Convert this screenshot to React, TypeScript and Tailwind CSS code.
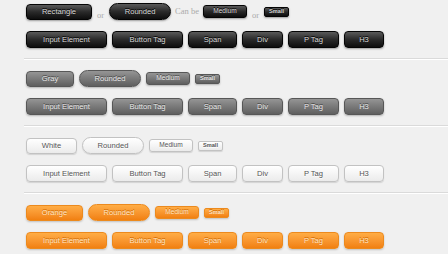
import React from 'react'

type Theme = 'black' | 'gray' | 'white' | 'orange'

const SKIN: Record<Theme, string> = {
  black:
    'bg-linear-to-b from-[#5a5a5a] via-[#2a2a2a] to-[#0e0e0e] border border-[#050505] text-[#d8d8d8] [text-shadow:0_-1px_0_#000] shadow-[0_1px_2px_rgba(0,0,0,0.35)]',
  gray:
    'bg-linear-to-b from-[#959595] to-[#5f5f5f] border border-[#575757] text-[#e8e8e8] [text-shadow:0_-1px_0_#444] shadow-[0_1px_2px_rgba(0,0,0,0.25)]',
  white:
    'bg-linear-to-b from-white to-[#ebebeb] border border-[#c2c2c2] text-[#555] [text-shadow:0_1px_0_#fff] shadow-[0_1px_1px_rgba(0,0,0,0.12)]',
  orange:
    'bg-linear-to-b from-[#ffad45] to-[#f1800f] border border-[#ec8a1e] text-[#fde3c4] [text-shadow:0_-1px_0_#d06a00] shadow-[0_1px_2px_rgba(0,0,0,0.2)]',
}

const FIRST: Record<Theme, { label: string; w: string }> = {
  black: { label: 'Rectangle', w: 'w-[66px]' },
  gray: { label: 'Gray', w: 'w-[48px]' },
  white: { label: 'White', w: 'w-[51px]' },
  orange: { label: 'Orange', w: 'w-[57px]' },
}

const TAGS = [
  { label: 'Input Element', w: 'w-[81px]' },
  { label: 'Button Tag', w: 'w-[71px]' },
  { label: 'Span', w: 'w-[49px]' },
  { label: 'Div', w: 'w-[41px]' },
  { label: 'P Tag', w: 'w-[51px]' },
  { label: 'H3', w: 'w-[40px]' },
]

const base = "flex items-center justify-center shrink-0 font-['Liberation_Sans',Arial,sans-serif] leading-none antialiased"

function Btn({ theme, className, children }: { theme: Theme; className: string; children: React.ReactNode }) {
  return <span className={`${base} ${SKIN[theme]} ${className}`}>{children}</span>
}

function Note({ children }: { children: React.ReactNode }) {
  return (
    <span className="font-['Liberation_Serif','Times_New_Roman',serif] text-[8.5px] leading-none text-[#aaa]">
      {children}
    </span>
  )
}

function Section({ theme, last }: { theme: Theme; last?: boolean }) {
  const first = FIRST[theme]
  const isBlack = theme === 'black'
  return (
    <div className="flex flex-col">
      <div className={`flex items-center h-[17px] ${isBlack ? 'gap-[4px]' : 'gap-[5px]'}`}>
        <Btn theme={theme} className={`${first.w} h-[16px] rounded-[4px] text-[7.6px]`}>
          {first.label}
        </Btn>
        {isBlack && <span className="mx-[1px]"><Note>or</Note></span>}
        <Btn theme={theme} className="w-[62px] h-[17px] rounded-full text-[7.6px]">
          Rounded
        </Btn>
        {isBlack && <Note>Can be</Note>}
        <Btn theme={theme} className="w-[44px] h-[13px] rounded-[3px] text-[6.6px]">
          Medium
        </Btn>
        {isBlack && <span className="mx-[1px]"><Note>or</Note></span>}
        <Btn theme={theme} className="w-[25px] h-[10px] rounded-[2px] text-[5.6px] font-bold">
          Small
        </Btn>
      </div>
      <div className="flex items-center gap-[5px] mt-[11px] h-[17px]">
        {TAGS.map((t) => (
          <Btn key={t.label} theme={theme} className={`${t.w} h-[17px] rounded-[4px] text-[7.6px]`}>
            {t.label}
          </Btn>
        ))}
      </div>
      {!last && <div className="ml-[-2px] mt-[10px] mb-[10px] border-t border-[#dadada] border-b border-b-white" />}
    </div>
  )
}

export default function App() {
  return (
    <div className="w-[448px] h-[254px] overflow-hidden bg-[#f0f0f0] pl-[26px] pt-[3px]">
      <Section theme="black" />
      <Section theme="gray" />
      <Section theme="white" />
      <Section theme="orange" last />
    </div>
  )
}
